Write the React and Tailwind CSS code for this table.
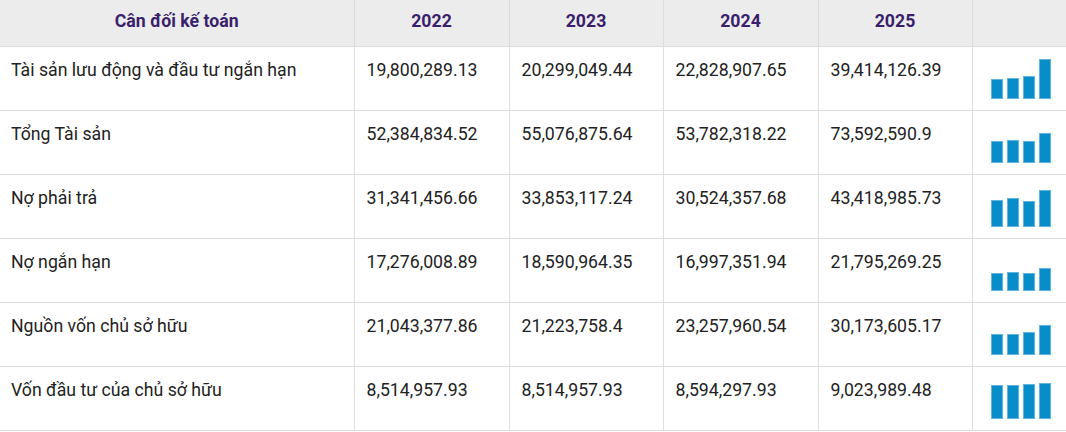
import React from 'react';

const rows = [
  { name: 'Tài sản lưu động và đầu tư ngắn hạn', values: ['19,800,289.13', '20,299,049.44', '22,828,907.65', '39,414,126.39'], bars: [20, 21, 23, 40] },
  { name: 'Tổng Tài sản', values: ['52,384,834.52', '55,076,875.64', '53,782,318.22', '73,592,590.9'], bars: [22, 23, 22, 30] },
  { name: 'Nợ phải trả', values: ['31,341,456.66', '33,853,117.24', '30,524,357.68', '43,418,985.73'], bars: [27, 29, 26, 37] },
  { name: 'Nợ ngắn hạn', values: ['17,276,008.89', '18,590,964.35', '16,997,351.94', '21,795,269.25'], bars: [18, 19, 18, 23] },
  { name: 'Nguồn vốn chủ sở hữu', values: ['21,043,377.86', '21,223,758.4', '23,257,960.54', '30,173,605.17'], bars: [21, 21, 23, 30] },
  { name: 'Vốn đầu tư của chủ sở hữu', values: ['8,514,957.93', '8,514,957.93', '8,594,297.93', '9,023,989.48'], bars: [34, 34, 35, 36] },
];

const years = ['2022', '2023', '2024', '2025'];

function Bars({ heights }) {
  return (
    <div className="flex items-end gap-[4px] h-[40px]">
      {heights.map((h, i) => (
        <div key={i} className="w-[12px] bg-[#078ec9] border border-[#5fb5dd]" style={{ height: h }} />
      ))}
    </div>
  );
}

export default function App() {
  return (
    <div className="w-[1066px] h-[432px] overflow-hidden bg-white" style={{ fontFamily: 'Roboto, "Noto Sans", sans-serif' }}>
      <table className="table-fixed border-collapse w-[1100px] text-[17.7px] text-[#222]">
        <colgroup>
          <col className="w-[354px]" />
          <col className="w-[155px]" />
          <col className="w-[154px]" />
          <col className="w-[155px]" />
          <col className="w-[154px]" />
          <col className="w-[128px]" />
        </colgroup>
        <thead>
          <tr className="h-[46px] bg-[#ececec] text-[#3a1f6c] font-bold">
            <th className="border-b border-r border-[#dcdcdc] text-center align-middle pb-[3px]">Cân đối kế toán</th>
            {years.map((y) => (
              <th key={y} className="border-b border-r border-[#dcdcdc] text-center align-middle pb-[3px]">{y}</th>
            ))}
            <th className="border-b border-[#dcdcdc]"></th>
          </tr>
        </thead>
        <tbody>
          {rows.map((r) => (
            <tr key={r.name} className="h-[64px]">
              <td className="border-b border-r border-[#dedede] align-top pl-[11px] pt-[10px] leading-[27px]">{r.name}</td>
              {r.values.map((v, i) => (
                <td key={i} className="border-b border-r border-[#dedede] align-top pl-[12px] pt-[10px] leading-[27px]">{v}</td>
              ))}
              <td className="border-b border-[#dedede] align-bottom pl-[18px] pb-[11px]">
                <Bars heights={r.bars} />
              </td>
            </tr>
          ))}
        </tbody>
      </table>
    </div>
  );
}
